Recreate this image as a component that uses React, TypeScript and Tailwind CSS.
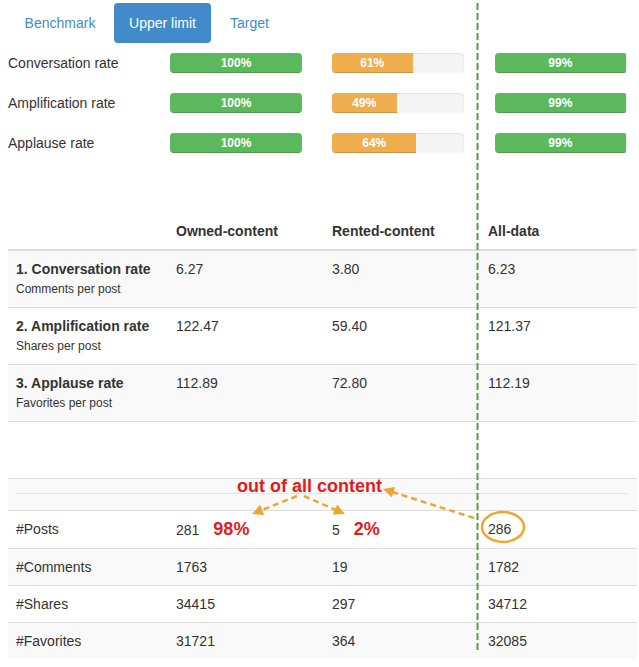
import React from "react";

const font = { fontFamily: '"Liberation Sans", Arial, Helvetica, sans-serif' };

function Bar({ pct, color, label }: { pct: number; color: "green" | "orange"; label: string }) {
  return (
    <div className="h-5 w-[132px] rounded-[4px] bg-[#f5f5f5] overflow-hidden shadow-[inset_0_1px_2px_rgba(0,0,0,0.1)]">
      <div
        className={
          "h-full text-center text-[12px] leading-5 font-bold text-white shadow-[inset_0_-1px_0_rgba(0,0,0,0.15)] " +
          (color === "green" ? "bg-[#5cb85c]" : "bg-[#f0ad4e]")
        }
        style={{ width: `${pct}%` }}
      >
        {label}
      </div>
    </div>
  );
}

function arrowHead(x1: number, y1: number, x2: number, y2: number, len = 11, half = 5.5) {
  const dx = x2 - x1;
  const dy = y2 - y1;
  const d = Math.sqrt(dx * dx + dy * dy);
  const ux = dx / d;
  const uy = dy / d;
  const bx = x2 - ux * len;
  const by = y2 - uy * len;
  const px = -uy;
  const py = ux;
  return `${x2},${y2} ${bx + px * half},${by + py * half} ${bx - px * half},${by - py * half}`;
}

function Arrow({ x1, y1, x2, y2 }: { x1: number; y1: number; x2: number; y2: number }) {
  const dx = x2 - x1;
  const dy = y2 - y1;
  const d = Math.sqrt(dx * dx + dy * dy);
  const ex = x2 - (dx / d) * 9;
  const ey = y2 - (dy / d) * 9;
  return (
    <g>
      <line x1={x1} y1={y1} x2={ex} y2={ey} stroke="#f0a62e" strokeWidth={2.5} strokeDasharray="6 4" />
      <polygon points={arrowHead(x1, y1, x2, y2)} fill="#f0a62e" />
    </g>
  );
}

const rows = [
  { t: "Conversation rate", o: 61 },
  { t: "Amplification rate", o: 49 },
  { t: "Applause rate", o: 64 },
];

const rates = [
  { t: "1. Conversation rate", s: "Comments per post", a: "6.27", b: "3.80", c: "6.23" },
  { t: "2. Amplification rate", s: "Shares per post", a: "122.47", b: "59.40", c: "121.37" },
  { t: "3. Applause rate", s: "Favorites per post", a: "112.89", b: "72.80", c: "112.19" },
];

const grid = "grid grid-cols-[160px_156px_156px_157px]";

export default function App() {
  return (
    <div className="relative w-[639px] h-[667px] bg-white text-[14px] text-[#333] overflow-hidden" style={font}>
      {/* Tabs */}
      <div className="flex pl-2 pt-[3px]">
        <div className="w-[104px] py-[10px] leading-5 text-center text-[#428bca] rounded-[4px]">Benchmark</div>
        <div className="ml-[2px] w-[97px] py-[10px] leading-5 text-center text-white bg-[#428bca] rounded-[4px]">Upper limit</div>
        <div className="ml-[2px] w-[73px] py-[10px] leading-5 text-center text-[#428bca] rounded-[4px]">Target</div>
      </div>

      {/* Progress rows */}
      <div className="px-2">
        {rows.map((r) => (
          <div key={r.t} className="flex items-center h-10">
            <div className="w-[162px] leading-5">{r.t}</div>
            <Bar pct={100} color="green" label="100%" />
            <div className="ml-[30px]">
              <Bar pct={r.o} color="orange" label={`${r.o}%`} />
            </div>
            <div className="ml-[31px]">
              <Bar pct={99} color="green" label="99%" />
            </div>
          </div>
        ))}
      </div>

      {/* Table */}
      <div className="mx-2 mt-[50px] w-[629px]">
        <div className={grid + " border-b-2 border-[#ddd] font-bold leading-5"}>
          <div className="p-2"></div>
          <div className="p-2">Owned-content</div>
          <div className="p-2">Rented-content</div>
          <div className="p-2">All-data</div>
        </div>
        {rates.map((r, i) => (
          <div
            key={r.t}
            className={grid + (i > 0 ? " border-t border-[#ddd]" : "") + (i % 2 === 0 ? " bg-[#f9f9f9]" : " bg-white")}
          >
            <div className="p-2">
              <div className="font-bold leading-5">{r.t}</div>
              <div className="text-[12px] leading-5">{r.s}</div>
            </div>
            <div className="p-2 leading-5">{r.a}</div>
            <div className="p-2 leading-5">{r.b}</div>
            <div className="p-2 leading-5">{r.c}</div>
          </div>
        ))}
        <div className="h-[57px] border-t border-[#ddd] bg-white"></div>
        <div className="border-t border-[#ddd] bg-[#f9f9f9] px-2">
          <div className="h-[15px] border-b border-[#e6e6e6] mr-[1px]"></div>
          <div className="h-[16px]"></div>
        </div>
        {[
          { t: "#Posts", a: "281", b: "5", c: "286", pa: "98%", pb: "2%" },
          { t: "#Comments", a: "1763", b: "19", c: "1782" },
          { t: "#Shares", a: "34415", b: "297", c: "34712" },
          { t: "#Favorites", a: "31721", b: "364", c: "32085" },
        ].map((r, i) => (
          <div
            key={r.t}
            className={grid + " border-t border-[#ddd] leading-5" + (i % 2 === 1 ? " bg-[#f9f9f9]" : " bg-white")}
          >
            <div className="p-2">{r.t}</div>
            <div className="p-2 flex items-baseline">
              <span>{r.a}</span>
              {r.pa && <span className="ml-[14px] text-[18px] font-bold text-[#e41a1a]">{r.pa}</span>}
            </div>
            <div className="p-2 flex items-baseline">
              <span>{r.b}</span>
              {r.pb && <span className="ml-[14px] text-[18px] font-bold text-[#e41a1a]">{r.pb}</span>}
            </div>
            <div className="p-2">{r.c}</div>
          </div>
        ))}
      </div>

      {/* Annotation text */}
      <div className="absolute left-[237px] top-[476px] text-[18px] leading-5 font-bold text-[#e41a1a]">out of all content</div>

      {/* Overlay drawing */}
      <svg className="absolute inset-0 pointer-events-none" width={639} height={667} viewBox="0 0 639 667">
        <line x1={477.5} y1={3} x2={477.5} y2={650} stroke="#56a040" strokeWidth={2} strokeDasharray="7 3" />
        <Arrow x1={297} y1={496} x2={252} y2={514} />
        <Arrow x1={304} y1={496} x2={345} y2={514} />
        <Arrow x1={474} y1={518} x2={383} y2={489} />
        <ellipse cx={503} cy={527} rx={21} ry={15} fill="none" stroke="#f0a62e" strokeWidth={2.5} />
      </svg>
    </div>
  );
}
